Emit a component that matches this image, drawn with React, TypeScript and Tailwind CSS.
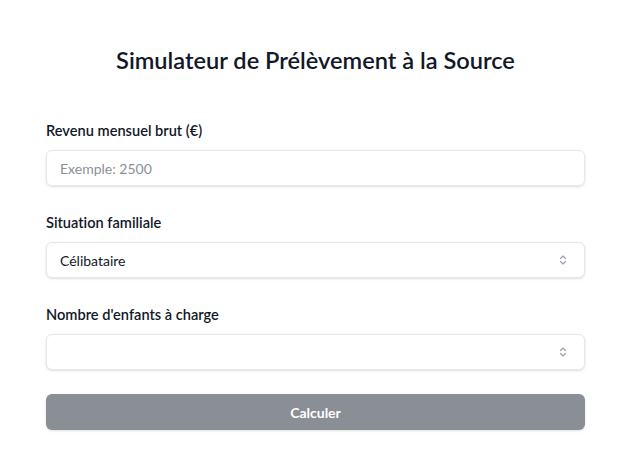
import React, { useState } from 'react';

function UpDown() {
  return (
    <svg width="10" height="12" viewBox="0 0 10 12" fill="none" stroke="#9ca3af" strokeWidth="1.2" strokeLinecap="round" strokeLinejoin="round" className="pointer-events-none absolute right-[17px] top-1/2 -translate-y-1/2">
      <path d="M2.5 4.5 L5 2 L7.5 4.5" />
      <path d="M2.5 7.5 L5 10 L7.5 7.5" />
    </svg>
  );
}

export default function App() {
  const [revenu, setRevenu] = useState('');
  const [situation, setSituation] = useState('celibataire');
  const [enfants, setEnfants] = useState('');

  return (
    <div className="min-h-screen bg-white pl-[46px] pr-[43px] pt-[44px] text-[#111827] [font-variant-ligatures:none]" style={{ fontFamily: 'Lato, "Noto Sans", sans-serif' }}>
      <h1 className="mb-[45px] text-center text-[23.6px] font-semibold leading-[32px]">
        Simulateur de Prélèvement à la Source
      </h1>

      <div className="flex flex-col gap-[27px]">
        <div>
          <label className="mb-[9px] block text-[14.6px] font-semibold leading-[20px]">Revenu mensuel brut (€)</label>
          <input
            type="number"
            value={revenu}
            onChange={(e) => setRevenu(e.target.value)}
            placeholder="Exemple: 2500"
            className="h-[36px] w-full rounded-md border border-[#e5e7eb] px-[13px] text-[14px] shadow-sm outline-none placeholder:text-[#8b8f96]"
          />
        </div>

        <div>
          <label className="mb-[9px] block text-[14.6px] font-semibold leading-[20px]">Situation familiale</label>
          <div className="relative">
            <select
              value={situation}
              onChange={(e) => setSituation(e.target.value)}
              className="h-[36px] w-full appearance-none rounded-md border border-[#e5e7eb] bg-white px-[13px] text-[14px] shadow-sm outline-none"
            >
              <option value="celibataire">Célibataire</option>
              <option value="marie">Marié(e) / Pacsé(e)</option>
            </select>
            <UpDown />
          </div>
        </div>

        <div>
          <label className="mb-[9px] block text-[14.6px] font-semibold leading-[20px]">Nombre d'enfants à charge</label>
          <div className="relative">
            <select
              value={enfants}
              onChange={(e) => setEnfants(e.target.value)}
              className="h-[36px] w-full appearance-none rounded-md border border-[#e5e7eb] bg-white px-[13px] text-[14px] shadow-sm outline-none"
            >
              <option value=""></option>
              <option value="0">0</option>
              <option value="1">1</option>
              <option value="2">2</option>
              <option value="3">3+</option>
            </select>
            <UpDown />
          </div>
        </div>
      </div>

      <button className="mt-[24px] h-[36px] w-full rounded-md bg-[#8a8e95] text-[14px] font-bold text-white shadow-sm">
        Calculer
      </button>
    </div>
  );
}
